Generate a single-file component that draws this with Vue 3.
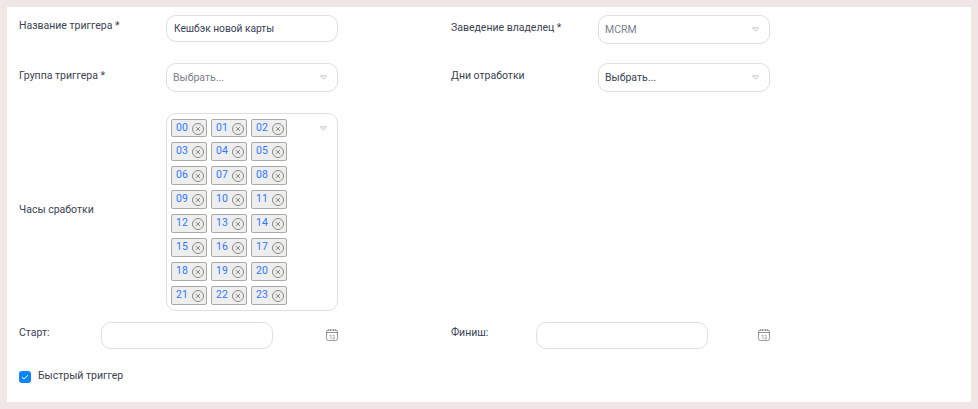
<script setup>
const hours = Array.from({ length: 24 }, (_, i) => String(i).padStart(2, '0'))
</script>

<template>
  <div class="page">
    <form class="panel" @submit.prevent>
      <div class="grid">
        <div class="field row-a">
          <label class="label first">Название триггера *</label>
          <div class="control text short"><span class="value">Кешбэк новой карты</span></div>
        </div>
        <div class="field row-a">
          <label class="label right-first">Заведение владелец *</label>
          <div class="control">
            <span class="muted">MCRM</span>
            <svg class="caret" viewBox="0 0 7 5"><path d="M0.5 0.8H6.5L3.5 4.2Z" /></svg>
          </div>
        </div>

        <div class="field row-b">
          <label class="label group">Группа триггера *</label>
          <div class="control">
            <span class="muted">Выбрать...</span>
            <svg class="caret" viewBox="0 0 7 5"><path d="M0.5 0.8H6.5L3.5 4.2Z" /></svg>
          </div>
        </div>
        <div class="field row-b">
          <label class="label days">Дни отработки</label>
          <div class="control">
            <span class="value dark">Выбрать...</span>
            <svg class="caret" viewBox="0 0 7 5"><path d="M0.5 0.8H6.5L3.5 4.2Z" /></svg>
          </div>
        </div>

        <div class="field row-c">
          <label class="label hours-label">Часы сработки</label>
          <div class="control multi">
            <div class="tags">
              <span v-for="h in hours" :key="h" class="tag">
                <span class="tag-text">{{ h }}</span>
                <svg class="tag-x" viewBox="0 0 12 12">
                  <circle cx="6" cy="6" r="5.5" />
                  <path d="M3.9 3.9L8.1 8.1M8.1 3.9L3.9 8.1" />
                </svg>
              </span>
            </div>
            <svg class="caret multi-caret" viewBox="0 0 7 5"><path d="M0.5 0.8H6.5L3.5 4.2Z" /></svg>
          </div>
        </div>
        <div class="row-c"></div>

        <div class="field date">
          <label class="label date-label start">Старт:</label>
          <div class="control text short"></div>
          <svg class="cal" viewBox="0 0 12 12">
            <rect x="0.5" y="1" width="11" height="10.5" rx="2" />
            <path d="M0.5 3.5H11.5M2.5 0.3V2M4.5 0.3V2M7.5 0.3V2M9.5 0.3V2" />
            <text x="6" y="9.8" text-anchor="middle" class="cal-num">12</text>
          </svg>
        </div>
        <div class="field date">
          <label class="label date-label finish">Финиш:</label>
          <div class="control text short"></div>
          <svg class="cal" viewBox="0 0 12 12">
            <rect x="0.5" y="1" width="11" height="10.5" rx="2" />
            <path d="M0.5 3.5H11.5M2.5 0.3V2M4.5 0.3V2M7.5 0.3V2M9.5 0.3V2" />
            <text x="6" y="9.8" text-anchor="middle" class="cal-num">12</text>
          </svg>
        </div>
      </div>

      <div class="check-row">
        <span class="check">
          <svg viewBox="0 0 12 12"><path d="M3 6.3L5 8L9 4.2" /></svg>
        </span>
        <span class="check-label">Быстрый триггер</span>
      </div>
    </form>
  </div>
</template>

<style scoped>
.page {
  width: 978px;
  height: 409px;
  box-sizing: border-box;
  padding: 7px;
  background: #efe6e5;
  font-family: Roboto, "Liberation Sans", sans-serif;
  font-size: 10.5px;
  line-height: 14px;
  color: #3b4150;
}
.panel {
  height: 395px;
  box-sizing: border-box;
  padding: 8px 12px 0;
  background: #fff;
}
.grid {
  display: grid;
  grid-template-columns: 319px 319px;
  grid-template-rows: 48px 50px 209px 27px;
  column-gap: 113px;
}
.field {
  display: flex;
  align-items: flex-start;
}
.label {
  flex: none;
  width: 147px;
  padding-top: 5px;
}
.label.first {
  padding-top: 4px;
}
.label.right-first {
  padding-top: 6px;
}
.label.group {
  padding-top: 6px;
}
.label.days {
  padding-top: 6px;
}
.hours-label {
  align-self: center;
  padding-top: 0;
  margin-top: -15px;
}
.date-label {
  padding-top: 4px;
}
.date-label.start {
  width: 82px;
}
.date-label.finish {
  width: 85px;
}
.control {
  flex: none;
  box-sizing: border-box;
  width: 172px;
  height: 29px;
  display: flex;
  align-items: center;
  justify-content: space-between;
  padding: 0 10px 0 6px;
  background: #fff;
  border: 1px solid #dfdfdf;
  border-radius: 10px;
}
.short {
  height: 27px;
}
.value {
  padding-left: 1px;
}
.text .value {
  font-size: 10.2px;
}
.dark {
  padding-left: 0;
}
.muted {
  color: #7c808b;
}
.caret {
  flex: none;
  width: 7px;
  height: 5px;
  fill: #fff;
  stroke: #bdbdbd;
  stroke-width: 0.9;
}
.multi {
  height: 198px;
  align-items: flex-start;
  padding: 5px 10px 0 4px;
}
.multi-caret {
  margin-top: 7px;
}
.tags {
  display: grid;
  grid-template-columns: repeat(3, 36px);
  grid-template-rows: 18px;
  grid-auto-rows: 19px;
  gap: 5px 4px;
  width: 116px;
}
.tag {
  box-sizing: border-box;
  display: flex;
  justify-content: space-between;
  padding: 0 2px 0 4px;
  background: #eeeeee;
  border: 1px solid #a9a9a9;
  border-radius: 2px;
}
.tag-text {
  color: #2f78ff;
  line-height: 14px;
  padding-top: 1px;
}
.tag-x {
  width: 12px;
  height: 12px;
  margin-top: 3px;
  fill: none;
  stroke: #8b8b84;
  stroke-width: 1;
}
.date {
  position: relative;
}
.cal {
  flex: none;
  width: 12px;
  height: 12px;
  margin-left: auto;
  margin-top: 7px;
  fill: none;
  stroke: #8a8a8a;
  stroke-width: 0.9;
}
.cal-num {
  font-size: 5.5px;
  font-family: Roboto, sans-serif;
  fill: #7a7a7a;
  stroke: none;
}
.check-row {
  display: flex;
  align-items: flex-start;
  margin-top: 21px;
}
.check {
  flex: none;
  width: 12px;
  height: 12px;
  margin-top: 1px;
  background: #0b84ff;
  border-radius: 3px;
}
.check svg {
  display: block;
  width: 12px;
  height: 12px;
  fill: none;
  stroke: #fff;
  stroke-width: 1;
}
.check-label {
  margin-left: 7px;
  margin-top: -1px;
}
</style>

<style>
body {
  margin: 0;
  background: #efe6e5;
}
</style>
